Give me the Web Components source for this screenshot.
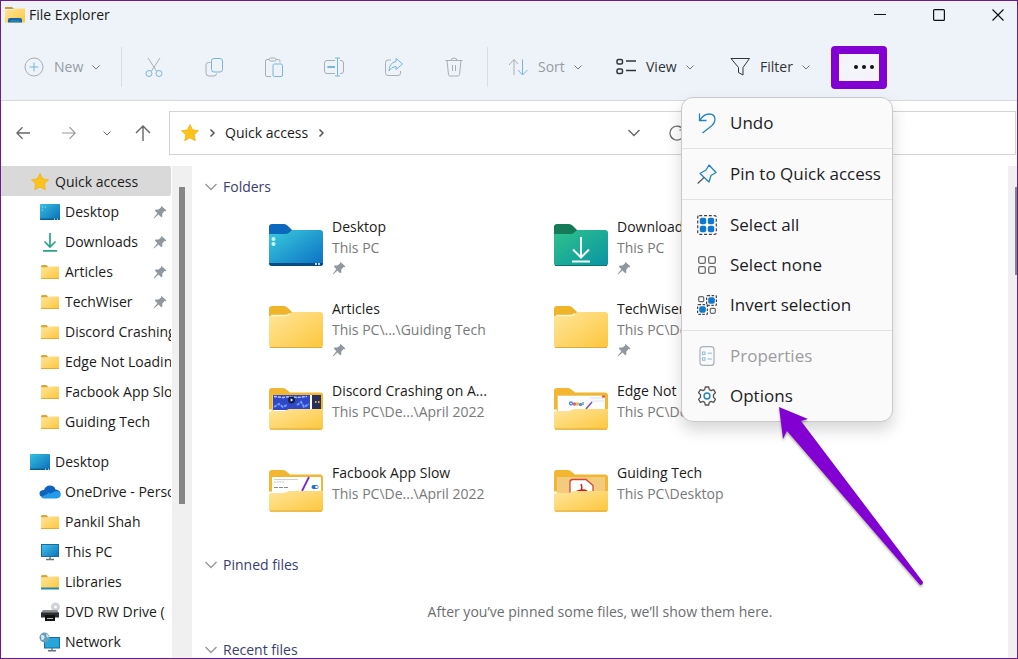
<!DOCTYPE html>
<html lang="en">
<head>
<meta charset="utf-8">
<meta name="viewport" content="width=device-width, initial-scale=1">
<title>File Explorer</title>
<style>
  html, body { margin: 0; height: 100%; }
  body { font: 14px/20px "Open Sans", "Noto Sans", sans-serif; color: #1a1a1a; overflow: hidden; }
</style>
</head>
<body>
<explorer-window></explorer-window>

<script>
const YELLOW = `<defs><linearGradient id="g" x1="0" y1="0" x2="1" y2="1"><stop offset="0" stop-color="#ffe69c"/><stop offset="1" stop-color="#fcc63c"/></linearGradient></defs>`;
const smallFolder = (extra = "") => `${YELLOW}<path d="M1 3.5q0-1.5 1.500-1.500h4l2 2.500h-7.500z" fill="#e0a526"/><path d="M1 5h6.500l1.500-1.500h9.500q.5 0 .5.500v11.500h-18z" fill="url(#g)"/><path d="M1 15.500h18" stroke="#e3ab35" fill="none"/>${extra}`;
const openFolder = preview => `${YELLOW}<path d="M0 5q0-3 3-3h11q2 0 4 2l3 2.500h30q3 0 3 3v14H0z" fill="#f2b630"/><path d="M3 9h48v20H3z" fill="#f3cb7c"/>${preview}<path d="M0 27q0-2 2-2h13l5-2h32q2 0 2 2v16q0 3-3 3H3q-3 0-3-3z" fill="url(#g)"/><path d="M1 43h52" stroke="#dda943" fill="none"/>`;

const ICONS = {
  app: [20, 20, `${YELLOW}<path d="M0 2h7l2 2h-9z" fill="#d6961c"/><path d="M0 5h8l1.500-1.500H20V17.500H0z" fill="url(#g)"/><path d="M3 17.500v-3q0-1.500 2-1.500h10q2 0 2 1.500v3z" fill="#1766a8"/><path d="M5.500 16h9" stroke="#3f92c8" fill="none"/>`],
  plus: [20, 20, `<circle cx="10" cy="10" r="9" stroke="#a6adb4"/><path d="M10 5.500v9M5.500 10h9" stroke="#77b4d8"/>`],
  chev: [10, 10, `<path d="M1.500 3.500 5 7l3.500-3.500"/>`],
  chevR: [10, 10, `<path d="M3.500 1.500 7 5 3.500 8.500" stroke-width="1.500"/>`],
  chevL: [14, 14, `<path d="M1.500 4 7 9.500 12.500 4" stroke-width="1.400"/>`],
  cut: [20, 20, `<path d="M4 1l8.500 13M16 1 7.500 14" stroke="#a9aeb3"/><circle cx="5" cy="16.500" r="3" stroke="#79b5da"/><circle cx="15" cy="16.500" r="3" stroke="#79b5da"/>`],
  copy: [20, 20, `<path d="M6.500 5.500H4.500q-2.500 0-2.500 2.500v8q0 3 3 3h5q2.500 0 2.500-2.500" stroke="#a9aeb3"/><rect x="7.500" y="1.500" width="11" height="13.500" rx="2.500" stroke="#79b5da"/>`],
  paste: [20, 20, `<path d="M7 19.500H3q-1.500 0-1.500-1.500V4q0-1.500 1.500-1.500h2M12 2.500h2.500Q16 2.500 16 4v1.500" stroke="#a9aeb3"/><rect x="5" y="1" width="7" height="3" rx="1.500" stroke="#a9aeb3"/><rect x="9" y="7" width="9.500" height="12.500" rx="1.500" stroke="#79b5da"/>`],
  rename: [22, 20, `<path d="M12 3.500H4q-2.500 0-2.500 2.500v8q0 2.500 2.500 2.500h8M17 3.500h1q2.500 0 2.500 2.500v8q0 2.500-2.500 2.500h-1" stroke="#a9aeb3"/><path d="M14.500 1v18M12 1h5M12 19h5M4.500 10H12" stroke="#79b5da"/><path d="M4.500 10H12" stroke="#79b5da" stroke-width="2"/>`],
  share: [20, 20, `<path d="M7 3H4Q1.500 3 1.500 5.500v10Q1.500 18.500 4 18.500h10q2.500 0 2.500-2.500v-2" stroke="#a9aeb3"/><path d="M12 1.500l6.500 5.500-6.500 5.500V9.500Q7.500 9.500 5 14q0-8 7-9.500z" stroke="#79b5da" stroke-linejoin="round"/>`],
  trash: [20, 20, `<path d="M1.500 3.500h17M7 3.500q0-2.500 3-2.500t3 2.500M3 3.500l1.500 14q.2 1.500 1.500 1.500h8q1.300 0 1.500-1.500L17 3.500M8.500 8v6M11.500 8v6" stroke="#a9aeb3"/>`],
  sort: [20, 20, `<path d="M6 18V2.500M1 8l5-5.500L10 7" stroke="#a9aeb3"/><path d="M14.500 2.500V18M10 13l4.500 5 5-5" stroke="#79b5da"/>`],
  view: [20, 20, `<rect x="1" y="2.500" width="5.500" height="4.500" rx="1.500" stroke-width="1.500"/><rect x="1" y="12" width="5.500" height="4.500" rx="1.500" stroke-width="1.500"/><path d="M10 4h10M10 13.500h10" stroke-width="1.300"/>`],
  filter: [20, 20, `<path d="M1 1.500h18.500L13 10.500V18l-4.500-2.500v-5z" stroke-linejoin="round"/>`],
  dots: [22, 6, `<g fill="#111" stroke="none"><circle cx="3" cy="3" r="2"/><circle cx="11" cy="3" r="2"/><circle cx="19" cy="3" r="2"/></g>`],
  min: [12, 14, `<path d="M0 6.500h12"/>`],
  max: [12, 14, `<rect x=".6" y="1.600" width="10.800" height="10.800" rx="1" stroke-width="1.200"/>`],
  close: [12, 14, `<path d="M.5 1.500l11 11M11.500 1.500l-11 11" stroke-width="1.200"/>`],
  back: [14, 14, `<path d="M14 7H.8M6.500 1.200.8 7l5.700 5.800" stroke-width="1.300"/>`],
  forward: [14, 14, `<path d="M0 7h13.200M7.500 1.200 13.200 7l-5.700 5.800" stroke-width="1.200"/>`],
  up: [16, 16, `<path d="M8 16V1M1 8l7-7 7 7" stroke-width="1.400"/>`],
  refresh: [16, 16, `<path d="M14 4.500A7 7 0 1 0 15 8M14.500 1v4h-4" stroke-width="1.200"/>`],
  star: [18, 18, `<path d="M9 .5l2.600 5.300 5.900.9-4.200 4.100 1 5.900L9 13.900l-5.300 2.800 1-5.900L.5 6.700l5.900-.9z" fill="#fcc41a" stroke="#efae12" stroke-width=".7"/>`],
  desk: [20, 18, `<defs><linearGradient id="d" x1="0" y1="0" x2="1" y2="1"><stop offset="0" stop-color="#35bfe0"/><stop offset="1" stop-color="#0b6db8"/></linearGradient></defs><rect y="1" width="20" height="16" rx="1" fill="url(#d)"/><path d="M0 15.500h20v.5q0 1-1 1H1q-1 0-1-1z" fill="#0a5f98"/><path d="M2 4h1M2 7h1M5 4h1" stroke="#a8e6f8"/><path d="M14 16.200h1M17 16.200h1" stroke="#fff"/>`],
  deskPlain: [20, 18, `<defs><linearGradient id="d" x1="0" y1="0" x2="1" y2="1"><stop offset="0" stop-color="#35bfe0"/><stop offset="1" stop-color="#0b6db8"/></linearGradient></defs><rect y="1" width="20" height="16" rx="1" fill="url(#d)"/><path d="M0 15.500h20v.5q0 1-1 1H1q-1 0-1-1z" fill="#0a5f98"/><path d="M15 16.200h1M18 16.200h1" stroke="#fff"/>`],
  down: [20, 20, `<path d="M10 1v14M4.500 9.500l5.500 5.500 5.500-5.500M3 18.800h14" stroke="#27a48a" stroke-width="1.700"/>`],
  folder: [20, 18, smallFolder()],
  library: [20, 18, smallFolder(`<path d="M1 15.500h18" stroke="#2788ad" stroke-width="2"/>`)],
  cloud: [22, 16, `<path d="M5 13.500Q.5 13 .5 9.500T5 6q1.500-4.500 6-4.500T16.500 5.500q5 .5 5 4.500t-4 4z" fill="#0f63bd"/><path d="M5 6l6.500 3.500L17 7q4.500.5 4.500 3.800T17.500 14.500H5.500q-2 0-3.500-1.500l8-4z" fill="#239be8"/>`],
  pc: [20, 18, `<defs><linearGradient id="p" x1="0" y1="0" x2="1" y2="1"><stop offset="0" stop-color="#45c6ea"/><stop offset="1" stop-color="#0c70bc"/></linearGradient></defs><rect x="1.500" y="1.500" width="17" height="12" fill="url(#p)" stroke="#1b6b9c"/><path d="M10 14v2.500M6 16.500h8" stroke="#657580" stroke-width="1.400"/>`],
  dvd: [20, 20, `<circle cx="15.500" cy="5" r="4.500" fill="#cfd2d6"/><circle cx="15.500" cy="5" r="1.300" fill="#fff"/><path d="M3 8h14l2 3H1z" fill="#8b8f93"/><path d="M1 10.500h18v5H1z" fill="#2c2e30"/><path d="M5 13h10v6H5z" fill="#111"/><path d="M7 16.500h6" stroke="#bbb"/>`],
  network: [22, 20, `<rect x="5.500" y="5.500" width="15" height="10.500" fill="#27a5da" stroke="#1b6b9c"/><path d="M13 16v2.500M9 18.800h8" stroke="#657580" stroke-width="1.400"/><circle cx="5.500" cy="5.500" r="5" fill="#6b9fb9"/><path d="M2 3q4-.5 3.500 2.500T2.500 8zM7 1.500q3 1.500 3 3.500l-2 .5z" fill="#d3ecf3"/>`],
  pin: [14, 14, `<path d="M8.500 1l5 4.500-1.200.8-.8-.3-2.300 2.800.2 2.700-1.200.8L5.500 9.500 1 13.500.6 13l3.800-4.700L1.800 5.500l.9-1 2.800.1 2.800-2.300-.4-.8z" fill="#8f989f"/>`],
  undo: [20, 22, `<path d="M2.500 1.500v7h7M2.800 8.200Q7 2 12 2q6 0 6 5.500 0 3-3 6L5.500 21" stroke="#2583bd" stroke-width="1.300"/>`],
  pinOut: [20, 20, `<path d="M12 1l7 7.500-5 3-2 6.500L3 9.500 9 6z" stroke="#2583bd" stroke-width="1.300" stroke-linejoin="round"/><path d="M7 13.500.7 19.500" stroke="#555" stroke-width="1.200"/>`],
  all: [20, 20, `<rect x=".7" y=".7" width="18.600" height="18.600" rx="1.500" stroke="#444" stroke-width="1.200" stroke-dasharray="3 1.800"/><g fill="#1079cc" stroke="none"><rect x="2.800" y="2.800" width="6.400" height="6.400" rx="2"/><rect x="10.800" y="2.800" width="6.400" height="6.400" rx="2"/><rect x="2.800" y="10.800" width="6.400" height="6.400" rx="2"/><rect x="10.800" y="10.800" width="6.400" height="6.400" rx="2"/></g>`],
  none: [20, 20, `<g stroke="#6a6a6a" stroke-width="1.300"><rect x="1.700" y="1.700" width="6.600" height="6.600" rx="1.600"/><rect x="11.700" y="1.700" width="6.600" height="6.600" rx="1.600"/><rect x="1.700" y="11.700" width="6.600" height="6.600" rx="1.600"/><rect x="11.700" y="11.700" width="6.600" height="6.600" rx="1.600"/></g>`],
  invert: [20, 20, `<g stroke="#666" stroke-width="1.200"><rect x="1.700" y="1.700" width="5" height="5" rx="1.200"/><rect x="13.300" y="13.300" width="5" height="5" rx="1.200"/><rect x="9.600" y=".6" width="9.800" height="9.800" rx="1" stroke="#444" stroke-dasharray="2.500 1.500"/><rect x=".6" y="9.600" width="9.800" height="9.800" rx="1" stroke="#444" stroke-dasharray="2.500 1.500"/></g><g fill="#1079cc" stroke="none"><rect x="11.200" y="2.200" width="6.600" height="6.600" rx="2"/><rect x="2.200" y="11.200" width="6.600" height="6.600" rx="2"/></g>`],
  props: [20, 20, `<rect x="3" y=".6" width="14" height="18.800" rx="3" stroke="#a9b0b5" stroke-width="1.200"/><g stroke="#8dbcdb"><rect x="5.500" y="6" width="2.500" height="2.500"/><rect x="5.500" y="11.800" width="2.500" height="2.500"/><path d="M10.500 7.200H15M10.500 13H15"/></g>`],
  gear: [20, 20, `<path d="M8.300 1h3.400l.6 2.600 1.800 1 2.500-.9 1.800 3-1.900 1.900v2.800l1.900 1.900-1.800 3-2.500-.9-1.800 1-.6 2.600H8.300l-.6-2.600-1.800-1-2.500.9-1.800-3 1.900-1.900V8.600L1.600 6.700l1.800-3 2.500.9 1.800-1z" stroke="#555" stroke-width="1.300" stroke-linejoin="round"/><circle cx="10" cy="10" r="2.900" stroke="#2583bd" stroke-width="1.500"/>`],

  bigDesktop: [54, 46, `<defs><linearGradient id="b" x1="0" y1="0" x2="1" y2="1"><stop offset="0" stop-color="#3bcbdc"/><stop offset="1" stop-color="#0a6fc4"/></linearGradient></defs><path d="M0 5q0-3 3-3h12q2 0 4 2l4 4v6H0z" fill="#0c68bd"/><path d="M0 12h17q2 0 4-2l2-2h28q3 0 3 3v30q0 3-3 3H3q-3 0-3-3z" fill="url(#b)"/><path d="M0 41h54q0 3-3 3H3q-3 0-3-3z" fill="#0a4a82"/><g fill="#c9f4f8" stroke="none"><circle cx="4.500" cy="17" r="2"/><circle cx="4.500" cy="22" r="2"/></g><path d="M46 42h2M49 42h2" stroke="#fff" stroke-width="1.500"/>`],
  bigDownloads: [54, 46, `<defs><linearGradient id="b" x1="0" y1="0" x2="1" y2="1"><stop offset="0" stop-color="#2fc38a"/><stop offset="1" stop-color="#0a93a5"/></linearGradient></defs><path d="M0 5q0-3 3-3h12q2 0 4 2l4 4v6H0z" fill="#157a57"/><path d="M0 12h17q2 0 4-2l2-2h28q3 0 3 3v30q0 3-3 3H3q-3 0-3-3z" fill="url(#b)"/><path d="M1 43.500h52" stroke="#0b7668"/><path d="M27 15v20M19 27.500l8 8 8-8M18 39.500h18" stroke="#f4fffb" stroke-width="2"/>`],
  bigFolder: [54, 46, `${YELLOW}<path d="M0 5q0-3 3-3h12q2 0 4 2l4 4v6H0z" fill="#f0b428"/><path d="M0 12h17q2 0 4-2l2-2h28q3 0 3 3v30q0 3-3 3H3q-3 0-3-3z" fill="url(#g)"/><path d="M2 11.500h15q2 0 4-2" stroke="#fff5d5" stroke-width="1.500"/><path d="M1 43.500h52" stroke="#dda943"/>`],
  bigDiscord: [54, 46, openFolder(`<path d="M4 9h48v18H4z" fill="#fff"/><path d="M4 9h37v15H4z" fill="#3048c8"/><path d="M43 9h9v15h-9z" fill="#27305a"/><path d="M5 10.500l9 1 7-1 7 1 10-1" stroke="#b8c4ff" stroke-width="1.500" stroke-dasharray="3 1"/><path d="M5 21l5-3 4 3 4-2M28 19l4-3 3 5 5-3" stroke="#6f9cff" stroke-width="2" stroke-dasharray="3 1"/><circle cx="22.500" cy="14" r="3.500" fill="#14204c"/><path d="M21.700 12.500l2.500 1.500-2.500 1.500z" fill="#fff"/><path d="M46 16h1.500M49 16h1.500" stroke="#eab24a" stroke-width="2"/>`)],
  bigFacebook: [54, 46, openFolder(`<path d="M3 9h49v18H3z" fill="#fff"/><path d="M5 11.500h24M5 14h10" stroke="#cfcfd3"/><path d="M5 19.500h15" stroke="#8b8b90" stroke-width="1.200" stroke-dasharray="4 1"/><path d="M40 9l-7 14" stroke="#7d2bc4" stroke-width="1.800"/><path d="M44.500 19h3" stroke="#2272c9" stroke-width="4" stroke-linecap="round"/><circle cx="47.500" cy="19" r="1.300" fill="#fff"/>`)],
  bigEdge: [54, 46, openFolder(`<path d="M4 10h47v17H4z" fill="#fdfdff"/><path d="M36 12h14M38 15h12" stroke="#dde1ee"/><g stroke-width="1.300"><circle cx="17" cy="17.500" r="1.500" stroke="#4285f4"/><circle cx="20.500" cy="18" r="1" stroke="#e2574c"/><circle cx="23.500" cy="18" r="1" stroke="#efb82f"/><circle cx="26.500" cy="18.500" r="1" stroke="#4285f4"/><path d="M29 16v3" stroke="#5c9a6b"/></g><path d="M32 23l6-7" stroke="#7a4fb5" stroke-width="1.500"/><path d="M48 10.500h3" stroke="#e34a4a" stroke-width="2"/>`)],
  bigGuiding: [54, 46, openFolder(`<path d="M16 29V14q0-2.500 3-2.500h13l7 6V29z" fill="#fff" stroke="#d8423b" stroke-width="1.300"/><path d="M27 16q2 4-1 8-3 3-4 1t7-3q4 0 4 2" stroke="#c8201a" stroke-width="1.500"/>`)]
};

class UiIcon extends HTMLElement {
  connectedCallback() {
    const [w, h, body] = ICONS[this.getAttribute("name")];
    this.attachShadow({ mode: "open" }).innerHTML = `
      <style>:host { display: inline-flex; flex: none; } svg { display: block; }</style>
      <svg width="${w}" height="${h}" viewBox="0 0 ${w} ${h}" fill="none" stroke="currentColor" aria-hidden="true">${body
        .replace(/<(path|rect|circle)([^>]*?)\/>/g, (m, t, a) => /fill="/.test(a) && !/stroke="/.test(a) ? `<${t}${a} stroke="none"/>` : m)}</svg>`;
  }
}

class CommandButton extends HTMLElement {
  connectedCallback() {
    const off = this.hasAttribute("disabled");
    this.attachShadow({ mode: "open" }).innerHTML = `
      <style>
        :host { display: flex; flex: none; }
        button { display: flex; align-items: center; gap: 10px; height: 40px; width: 100%; padding: 0; border: 0; background: none; font: inherit; color: #303438; }
        button:disabled { color: #969ca2; }
        :host([only]) button { justify-content: center; }
        span { display: flex; align-items: center; gap: 8px; color: inherit; }
        span ui-icon { color: #777; }
      </style>
      <button type="button" aria-label="${this.getAttribute("label")}" ${off ? "disabled" : ""}>
        <ui-icon name="${this.getAttribute("icon")}"></ui-icon>
        ${this.hasAttribute("only") ? "" : `<span><slot></slot><ui-icon name="chev"></ui-icon></span>`}
      </button>`;
  }
}

class MenuEntry extends HTMLElement {
  connectedCallback() {
    this.attachShadow({ mode: "open" }).innerHTML = `
      <style>
        :host { display: block; }
        button { display: flex; align-items: center; gap: 13px; width: 100%; height: 40px; padding: 0 0 0 15px; border: 0; background: none; font: inherit; color: #1d1d1f; text-align: left; white-space: nowrap; }
        button:disabled { color: #9d9d9f; }
      </style>
      <button type="button" role="menuitem" ${this.hasAttribute("disabled") ? "disabled" : ""}>
        <ui-icon name="${this.getAttribute("icon")}"></ui-icon><slot></slot>
      </button>`;
  }
}

class MoreMenu extends HTMLElement {
  connectedCallback() {
    this.attachShadow({ mode: "open" }).innerHTML = `
      <style>
        :host { display: block; position: relative; z-index: 5; }
        .more { display: flex; align-items: center; justify-content: flex-end; box-sizing: border-box; width: 56px; height: 43px; padding: 0 4px 0 0; border: 8px solid #8200d2; border-radius: 4px; background: #f3f5fb; }
        .menu { position: absolute; top: 51px; right: -6px; box-sizing: border-box; width: 212px; border: 1px solid #c9c9cc; border-radius: 12px; background: #fafafb; box-shadow: 0 8px 16px rgba(0,0,0,.16); font-size: 17px; line-height: 24px; }
        .group { padding: 5px 0; }
        .group + .group { border-top: 1px solid #e1e1e4; }
        .pointer { position: absolute; left: 96px; top: 308px; pointer-events: none; filter: drop-shadow(0 2px 1px rgba(60,70,30,.4)); }
      </style>
      <button class="more" type="button" aria-label="See more" aria-haspopup="menu" aria-expanded="true"><ui-icon name="dots"></ui-icon></button>
      <div class="menu" role="menu">
        <div class="group"><menu-entry icon="undo">Undo</menu-entry></div>
        <div class="group"><menu-entry icon="pinOut">Pin to Quick access</menu-entry></div>
        <div class="group">
          <menu-entry icon="all">Select all</menu-entry>
          <menu-entry icon="none">Select none</menu-entry>
          <menu-entry icon="invert">Invert selection</menu-entry>
        </div>
        <div class="group">
          <menu-entry icon="props" disabled>Properties</menu-entry>
          <menu-entry icon="gear">Options</menu-entry>
        </div>
        <svg class="pointer" width="148" height="182" viewBox="0 0 148 182" aria-hidden="true"><path d="M1 1l29 12-7 2 122 161q0 3-3 3L9 25l-4 8z" fill="#8200d2"/></svg>
      </div>`;
  }
}

class TreeItem extends HTMLElement {
  connectedCallback() {
    this.attachShadow({ mode: "open" }).innerHTML = `
      <style>
        :host { display: block; }
        a { display: flex; align-items: center; box-sizing: border-box; height: 30px; padding: 2px 0 0 38px; color: #1b1b1b; text-decoration: none; white-space: nowrap; overflow: hidden; }
        :host([root]) a { padding-left: 28px; }
        :host([current]) a { background: #d9d9d9; border-radius: 0 2px 2px 0; }
        .icon { display: flex; justify-content: center; flex: none; width: 22px; margin-right: 4px; }
        .text { flex: 1 0 auto; }
        .pin { margin-right: 4px; }
      </style>
      <a href="#" ${this.hasAttribute("current") ? 'aria-current="page"' : ""}>
        <span class="icon"><ui-icon name="${this.getAttribute("icon")}"></ui-icon></span>
        <span class="text"><slot></slot></span>
        ${this.hasAttribute("pinned") ? '<ui-icon class="pin" name="pin"></ui-icon>' : ""}
      </a>`;
  }
}

class FolderTile extends HTMLElement {
  connectedCallback() {
    this.attachShadow({ mode: "open" }).innerHTML = `
      <style>
        :host { display: block; }
        a { display: flex; gap: 9px; height: 60px; color: #1b1b1b; text-decoration: none; white-space: nowrap; }
        .art { padding-top: 5px; }
        .text { display: grid; grid-template-rows: 20px 21px 20px; align-items: center; }
        .where { color: #77797b; }
        .text > :nth-child(2) { align-self: end; }
      </style>
      <a href="#">
        <ui-icon class="art" name="${this.getAttribute("icon")}"></ui-icon>
        <span class="text">
          <span><slot></slot></span>
          <span class="where">${this.getAttribute("where")}</span>
          ${this.hasAttribute("pinned") ? '<ui-icon name="pin"></ui-icon>' : ""}
        </span>
      </a>`;
  }
}

class FileSection extends HTMLElement {
  connectedCallback() {
    this.attachShadow({ mode: "open" }).innerHTML = `
      <style>
        :host { display: block; }
        h2 { margin: 0; font: inherit; }
        button { display: flex; align-items: center; gap: 5px; height: 42px; padding: 0 0 0 12px; border: 0; background: none; font: inherit; color: #37406f; }
        ui-icon { color: #999; }
      </style>
      <h2><button type="button" aria-expanded="true"><ui-icon name="chevL"></ui-icon>${this.getAttribute("heading")}</button></h2>
      <slot></slot>`;
  }
}

class ExplorerWindow extends HTMLElement {
  connectedCallback() {
    this.attachShadow({ mode: "open" }).innerHTML = `
      <style>
        :host { display: flex; flex-direction: column; box-sizing: border-box; height: 100vh; border: 1px solid #701a91; background: #fff; overflow: hidden; }
        header { flex: none; background: #eef3f9; border-bottom: 1px solid #d5d9dd; }
        .title { display: flex; align-items: center; height: 28px; padding: 0 13px 0 4px; }
        h1 { margin: 0 auto 0 4px; font: inherit; }
        .controls { display: flex; gap: 47px; }
        .plain { display: flex; align-items: center; justify-content: center; padding: 0; border: 0; background: none; color: #111; }
        .bar { display: flex; align-items: center; height: 66px; padding-top: 5px; }
        .rule { width: 1px; height: 40px; background: #d9dee4; }
        .new { width: 97px; margin-left: 23px; }
        .tool { width: 60px; }
        .tools { display: flex; margin: 0 3px 0 2px; }
        .sort { width: 108px; margin-left: 20px; }
        .view { width: 114px; }
        .filter { width: 101px; }
        .nav { display: flex; align-items: center; flex: none; padding: 10px 1px 11px 15px; color: #555; }
        .nav > .plain { height: 24px; color: #666; }
        .fwd { margin-left: 32px; }
        .nav > .fwd { color: #999; }
        .recent { margin-left: 26px; }
        .upb { margin: 0 18px 0 23px; }
        .address { display: flex; align-items: center; flex: 1; box-sizing: border-box; height: 44px; padding-left: 11px; border: 1px solid #d4d4d6; }
        .address a { margin: 0 8px; color: #1b1b1b; text-decoration: none; }
        .address .sep { margin-left: 8px; }
        .address .last { margin-left: 0; }
        .drop { margin-left: 301px; margin-right: 28px; }
        .address .plain { color: #666; }
        .body { display: flex; flex: 1; min-height: 0; }
        nav { flex: none; width: 170px; overflow: hidden; }
        .gap { height: 10px; }
        .track { flex: none; width: 20px; margin-left: 1px; padding-top: 21px; box-sizing: border-box; background: #f0f0f0; }
        .thumb { width: 6px; height: 317px; margin-left: 7px; background: #868686; }
        main { flex: 1; min-width: 0; overflow: hidden; }
        .tiles { display: grid; grid-template-columns: repeat(auto-fill, 285px); row-gap: 22px; padding: 9px 0 21px 77px; }
        p { margin: 0; padding: 16px 0 7px; text-align: center; color: #6b6d70; }
        .edge { flex: none; width: 9px; padding-top: 21px; box-sizing: border-box; background: #f0f0f2; }
        .edge div { width: 2px; height: 88px; margin-left: auto; background: #858188; }
      </style>
      <header>
        <div class="title">
          <ui-icon name="app"></ui-icon><h1>File Explorer</h1>
          <div class="controls">
            <button class="plain" type="button" aria-label="Minimize"><ui-icon name="min"></ui-icon></button>
            <button class="plain" type="button" aria-label="Maximize"><ui-icon name="max"></ui-icon></button>
            <button class="plain" type="button" aria-label="Close"><ui-icon name="close"></ui-icon></button>
          </div>
        </div>
        <div class="bar" role="toolbar">
          <command-button class="new" icon="plus" label="New" disabled>New</command-button>
          <div class="rule"></div>
          <div class="tools">
            <command-button class="tool" only icon="cut" label="Cut" disabled></command-button>
            <command-button class="tool" only icon="copy" label="Copy" disabled></command-button>
            <command-button class="tool" only icon="paste" label="Paste" disabled></command-button>
            <command-button class="tool" only icon="rename" label="Rename" disabled></command-button>
            <command-button class="tool" only icon="share" label="Share" disabled></command-button>
            <command-button class="tool" only icon="trash" label="Delete" disabled></command-button>
          </div>
          <div class="rule"></div>
          <command-button class="sort" icon="sort" label="Sort" disabled>Sort</command-button>
          <command-button class="view" icon="view" label="View">View</command-button>
          <command-button class="filter" icon="filter" label="Filter">Filter</command-button>
          <more-menu></more-menu>
        </div>
      </header>
      <div class="nav">
        <button class="plain" type="button" aria-label="Back"><ui-icon name="back"></ui-icon></button>
        <button class="plain fwd" type="button" aria-label="Forward"><ui-icon name="forward"></ui-icon></button>
        <button class="plain recent" type="button" aria-label="Recent locations"><ui-icon name="chev"></ui-icon></button>
        <button class="plain upb" type="button" aria-label="Up"><ui-icon name="up"></ui-icon></button>
        <div class="address">
          <ui-icon name="star"></ui-icon><ui-icon class="sep" name="chevR"></ui-icon>
          <a href="#">Quick access</a><ui-icon class="last" name="chevR"></ui-icon>
          <button class="plain drop" type="button" aria-label="Previous locations"><ui-icon name="chevL"></ui-icon></button>
          <button class="plain" type="button" aria-label="Refresh"><ui-icon name="refresh"></ui-icon></button>
        </div>
      </div>
      <div class="body">
        <nav aria-label="Folders">
          <tree-item root current icon="star">Quick access</tree-item>
          <tree-item icon="desk" pinned>Desktop</tree-item>
          <tree-item icon="down" pinned>Downloads</tree-item>
          <tree-item icon="folder" pinned>Articles</tree-item>
          <tree-item icon="folder" pinned>TechWiser</tree-item>
          <tree-item icon="folder">Discord Crashing</tree-item>
          <tree-item icon="folder">Edge Not Loading</tree-item>
          <tree-item icon="folder">Facbook App Slow</tree-item>
          <tree-item icon="folder">Guiding Tech</tree-item>
          <div class="gap"></div>
          <tree-item root icon="deskPlain">Desktop</tree-item>
          <tree-item icon="cloud">OneDrive - Personal</tree-item>
          <tree-item icon="folder">Pankil Shah</tree-item>
          <tree-item icon="pc">This PC</tree-item>
          <tree-item icon="library">Libraries</tree-item>
          <tree-item icon="dvd">DVD RW Drive (</tree-item>
          <tree-item icon="network">Network</tree-item>
        </nav>
        <div class="track"><div class="thumb"></div></div>
        <main>
          <file-section heading="Folders">
            <div class="tiles">
              <folder-tile icon="bigDesktop" where="This PC" pinned>Desktop</folder-tile>
              <folder-tile icon="bigDownloads" where="This PC" pinned>Downloads</folder-tile>
              <folder-tile icon="bigFolder" where="This PC\\...\\Guiding Tech" pinned>Articles</folder-tile>
              <folder-tile icon="bigFolder" where="This PC\\Desktop" pinned>TechWiser</folder-tile>
              <folder-tile icon="bigDiscord" where="This PC\\De...\\April 2022">Discord Crashing on A...</folder-tile>
              <folder-tile icon="bigEdge" where="This PC\\Desktop">Edge Not</folder-tile>
              <folder-tile icon="bigFacebook" where="This PC\\De...\\April 2022">Facbook App Slow</folder-tile>
              <folder-tile icon="bigGuiding" where="This PC\\Desktop">Guiding Tech</folder-tile>
            </div>
          </file-section>
          <file-section heading="Pinned files"><p>After you’ve pinned some files, we’ll show them here.</p></file-section>
          <file-section heading="Recent files"></file-section>
        </main>
        <div class="edge"><div></div></div>
      </div>`;
  }
}

customElements.define("ui-icon", UiIcon);
customElements.define("command-button", CommandButton);
customElements.define("menu-entry", MenuEntry);
customElements.define("more-menu", MoreMenu);
customElements.define("tree-item", TreeItem);
customElements.define("folder-tile", FolderTile);
customElements.define("file-section", FileSection);
customElements.define("explorer-window", ExplorerWindow);
</script>
</body>
</html>
